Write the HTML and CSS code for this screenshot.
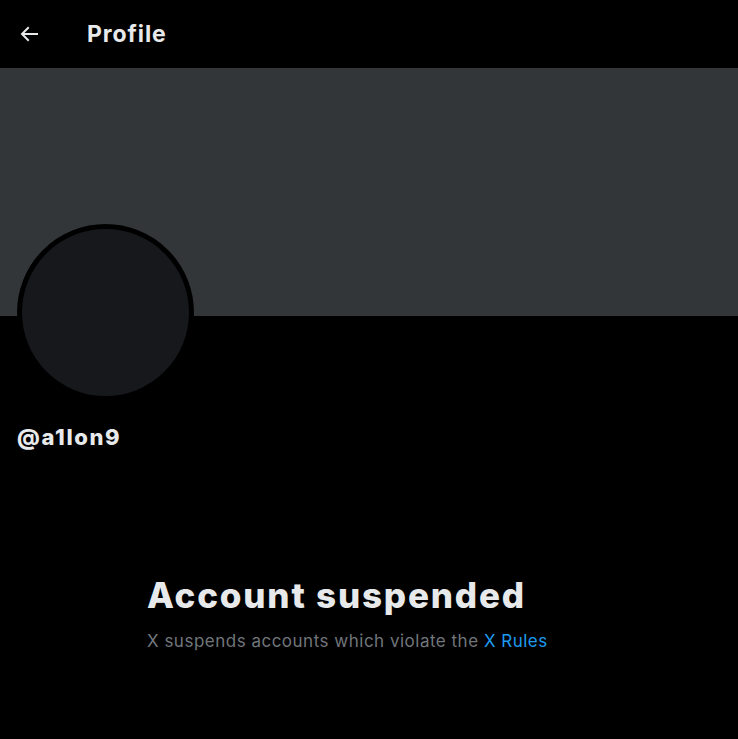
FILE: index.html
```html
<!DOCTYPE html>
<html lang="en">
<head>
<meta charset="utf-8">
<title>Profile</title>
<link rel="stylesheet" href="styles.css">
</head>
<body>
<div class="page">
  <header class="topbar">
    <div class="back">
      <svg viewBox="0 0 24 24" width="24" height="24" aria-hidden="true"><path fill="#e7e9ea" d="M7.414 13l5.043 5.04-1.414 1.42L3.586 12l7.457-7.46 1.414 1.42L7.414 11H21v2H7.414z"/></svg>
    </div>
    <h1 class="title">Profile</h1>
  </header>
  <div class="banner"></div>
  <section class="profile">
    <div class="avatar"></div>
    <div class="handle">@a1lon9</div>
  </section>
  <section class="suspended">
    <h2 class="s-title">Account suspended</h2>
    <p class="s-text">X suspends accounts which violate the <a class="link" href="#">X Rules</a></p>
  </section>
</div>
</body>
</html>
```
FILE: styles.css
```css
html, body {
  margin: 0;
  padding: 0;
  background: #000;
}
body {
  font-family: Inter, "Noto Sans", "DejaVu Sans", sans-serif;
  color: #e7e9ea;
}
.page {
  width: 738px;
  height: 739px;
  overflow: hidden;
}
.topbar {
  height: 68px;
  display: flex;
  align-items: center;
}
.back {
  width: 24px;
  height: 24px;
  margin-left: 17px;
  display: flex;
}
.title {
  margin: 0 0 0 46px;
  font-size: 23px;
  font-weight: 700;
  letter-spacing: 0.9px;
  line-height: 28px;
}
.banner {
  height: 248px;
  background: #333639;
}
.profile {
  padding-left: 17px;
}
.avatar {
  width: 167px;
  height: 167px;
  border: 5px solid #000;
  border-radius: 50%;
  background: #16181c;
  margin-top: -92px;
}
.handle {
  margin-top: 23px;
  font-size: 22px;
  font-weight: 800;
  line-height: 26px;
  letter-spacing: 1.6px;
}
.suspended {
  padding-left: 147px;
  margin-top: 124px;
}
.s-title {
  margin: 0;
  font-size: 35px;
  font-weight: 800;
  line-height: 42px;
  letter-spacing: 1.8px;
}
.s-text {
  margin: 14px 0 0;
  font-size: 17px;
  line-height: 22px;
  color: #71767b;
  letter-spacing: 0.5px;
}
.link {
  color: #1d9bf0;
  text-decoration: none;
}
```
